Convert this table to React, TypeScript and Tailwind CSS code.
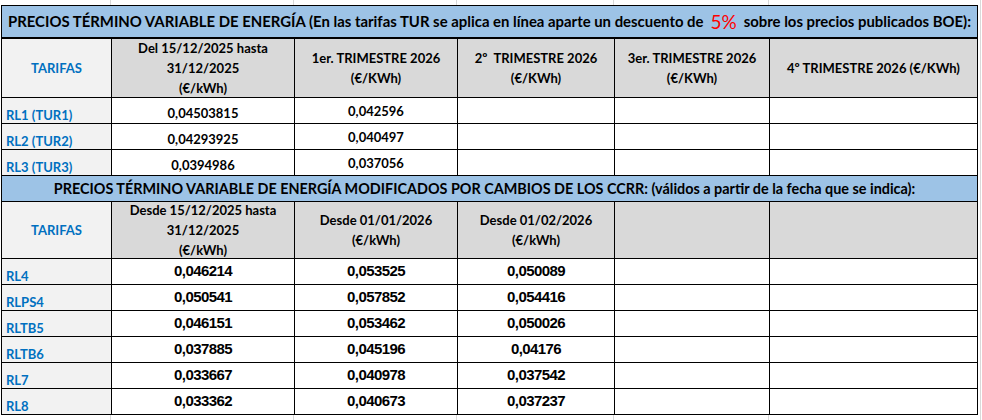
import React from "react";

const COLS = "grid grid-cols-[110px_183px_163px_157px_155px_208px]";
const CALIBRI = "font-['Lato','Noto_Sans',sans-serif]";
const ARIAL = "font-['Liberation_Sans',Arial,sans-serif]";

type Row = { label: string; values: string[] };

const turRows: Row[] = [
  { label: "RL1 (TUR1)", values: ["0,04503815", "0,042596"] },
  { label: "RL2 (TUR2)", values: ["0,04293925", "0,040497"] },
  { label: "RL3 (TUR3)", values: ["0,0394986", "0,037056"] },
];

const ccrrRows: Row[] = [
  { label: "RL4", values: ["0,046214", "0,053525", "0,050089"] },
  { label: "RLPS4", values: ["0,050541", "0,057852", "0,054416"] },
  { label: "RLTB5", values: ["0,046151", "0,053462", "0,050026"] },
  { label: "RLTB6", values: ["0,037885", "0,045196", "0,04176"] },
  { label: "RL7", values: ["0,033667", "0,040978", "0,037542"] },
  { label: "RL8", values: ["0,033362", "0,040673", "0,037237"] },
];

function GridStrip({ height }: { height: string }) {
  return (
    <div className={`${COLS} ml-[1px] ${height}`}>
      {[0, 1, 2, 3, 4, 5].map((i) => (
        <div key={i} className={i < 5 ? "border-r border-[#d9d9d9]" : ""} />
      ))}
    </div>
  );
}

function HeadCell({ children }: { children?: React.ReactNode }) {
  return (
    <div className="flex min-h-0 items-center justify-center border-r border-b border-black bg-[#d9d9d9] text-center text-[13px] font-bold leading-[20px] text-black">
      <div>{children}</div>
    </div>
  );
}

function LabelCell({ children, tall }: { children: React.ReactNode; tall?: boolean }) {
  return (
    <div
      className={`flex min-h-0 border-r border-b border-black bg-[#f2f2f2] text-[13px] font-bold text-[#0070c0] ${
        tall ? "items-center justify-center pt-[2px]" : "items-end pb-[1px] pl-[4px] leading-none"
      }`}
    >
      {children}
    </div>
  );
}

function EmptyCell() {
  return <div className="border-r border-b border-black bg-white" />;
}

export default function App() {
  return (
    <div className={`h-[420px] w-[982px] overflow-hidden bg-white ${CALIBRI}`}>
      <div className="flex">
        <div className="w-[978px]">
          <GridStrip height="h-[5px]" />

          <div className="ml-[1px] border-l border-t border-black">
            {/* first table */}
            <div className="flex h-[33px] items-center border-r border-b-2 border-black bg-[#9dc3e6] pl-[6px] text-[14.9px] font-bold text-black whitespace-nowrap">
              PRECIOS TÉRMINO VARIABLE DE ENERGÍA (En las tarifas TUR se aplica en línea aparte un descuento de
              <span className="mx-[7px] text-[19px] font-normal leading-none text-[#ff0000]">5%</span>
              sobre los precios publicados BOE):
            </div>

            <div className={`${COLS} h-[59px] grid-rows-[59px]`}>
              <LabelCell tall>TARIFAS</LabelCell>
              <HeadCell>
                Del 15/12/2025 hasta
                <br />
                31/12/2025
                <br />
                (€/kWh)
              </HeadCell>
              <HeadCell>
                1er. TRIMESTRE 2026
                <br />
                (€/KWh)
              </HeadCell>
              <HeadCell>
                2º&nbsp; TRIMESTRE 2026
                <br />
                (€/KWh)
              </HeadCell>
              <HeadCell>
                3er. TRIMESTRE 2026
                <br />
                (€/KWh)
              </HeadCell>
              <HeadCell>4º TRIMESTRE 2026 (€/KWh)</HeadCell>
            </div>

            {turRows.map((row) => (
              <div key={row.label} className={`${COLS} h-[26px] grid-rows-[26px]`}>
                <LabelCell>{row.label}</LabelCell>
                <div className="flex items-end justify-center border-r border-b border-black pb-[3px] text-[13px] font-bold leading-none text-black">
                  {row.values[0]}
                </div>
                <div className="flex items-center justify-center border-r border-b border-black pt-[1px] text-[13px] font-bold leading-none text-black">
                  {row.values[1]}
                </div>
                <EmptyCell />
                <EmptyCell />
                <EmptyCell />
              </div>
            ))}

            {/* second table */}
            <div className="flex h-[26px] items-center justify-center border-r border-b border-black bg-[#9dc3e6] pr-[10px] text-[14.4px] font-bold text-black whitespace-nowrap">
              PRECIOS TÉRMINO VARIABLE DE ENERGÍA MODIFICADOS POR CAMBIOS DE LOS CCRR: (válidos a partir de la fecha que se indica):
            </div>

            <div className={`${COLS} h-[57px] grid-rows-[57px]`}>
              <LabelCell tall>TARIFAS</LabelCell>
              <HeadCell>
                Desde 15/12/2025 hasta
                <br />
                31/12/2025
                <br />
                (€/kWh)
              </HeadCell>
              <HeadCell>
                Desde 01/01/2026
                <br />
                (€/kWh)
              </HeadCell>
              <HeadCell>
                Desde 01/02/2026
                <br />
                (€/kWh)
              </HeadCell>
              <HeadCell />
              <HeadCell />
            </div>

            {ccrrRows.map((row) => (
              <div key={row.label} className={`${COLS} h-[26px] grid-rows-[26px]`}>
                <LabelCell>{row.label}</LabelCell>
                {row.values.map((v, i) => (
                  <div
                    key={i}
                    className={`flex items-center justify-center border-r border-b border-black text-[15px] font-bold tracking-[-0.6px] text-black ${ARIAL}`}
                  >
                    {v}
                  </div>
                ))}
                <EmptyCell />
                <EmptyCell />
              </div>
            ))}
          </div>

          <GridStrip height="h-[6px]" />
        </div>
        <div className="ml-[2px] w-px bg-[#d9d9d9]" />
      </div>
    </div>
  );
}
